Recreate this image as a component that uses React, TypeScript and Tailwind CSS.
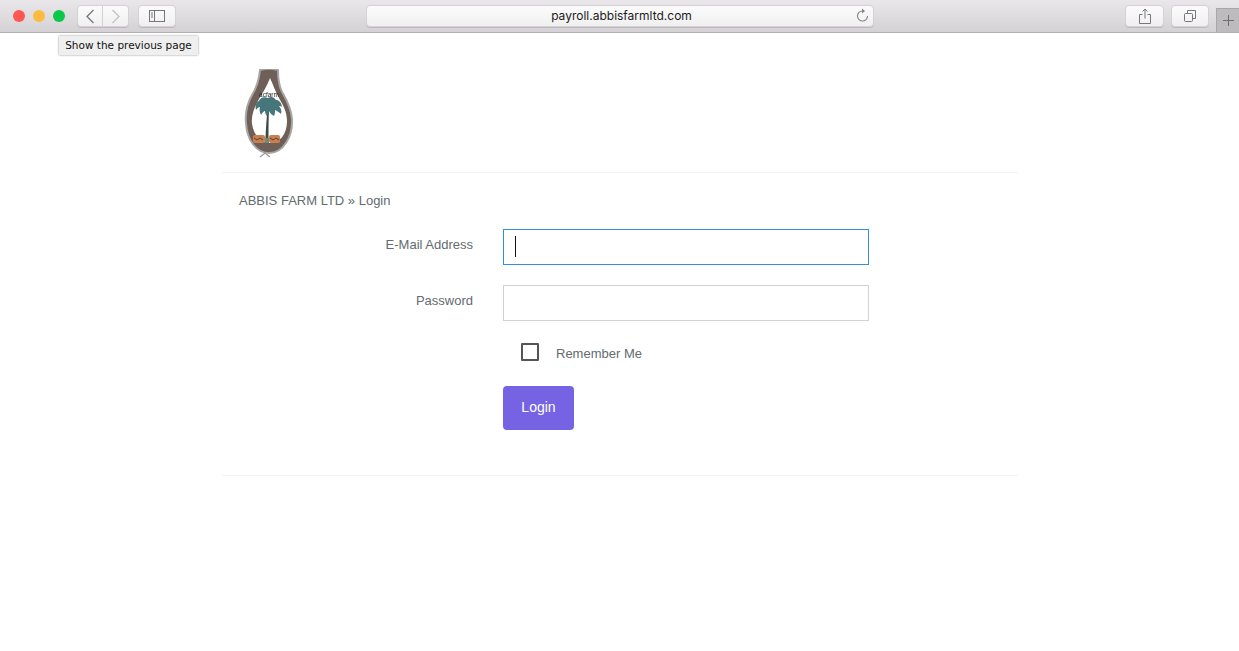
const toolBtn = "flex h-[22px] items-center justify-center rounded-[4px] border border-[#d4d2d4] bg-gradient-to-b from-[#fbfbfb] to-[#f1f0f1] shadow-[0_1px_0_rgba(0,0,0,0.12)]"

function Logo() {
    return (
        <svg width="52" height="90" viewBox="0 0 52 90" className="block blur-[0.5px]">
            <path d="M17 1 C16 12 14 18 9 26 C4 35 2 44 3 54 C4 72 14 84 26 84 C40 84 50 68 49 50 C48 38 43 30 39 23 C36 17 35 10 35 1 C30 -0.500 22 -0.500 17 1 Z" fill="#6e6058" stroke="#a8a5a3" strokeWidth="2" />
            <path d="M27 9 C24 17 20 23 16 30 C11 39 8 47 9 55 C11 67 18 74 27 74 C37 74 44 65 44 52 C44 43 40 36 36 29 C32 22 30 15 27 9 Z" fill="#ffffff" />
            <path d="M22.500 69 C23 58 23.500 50 24.500 41 L26 41 C25.500 50 25.500 60 25.500 69 Z" fill="#3d4a42" />
            <path d="M25 29 C21 27 17 29 16 32 C13 33 12 37 13 41 C14 39 16 38 17 38 C16 41 17 44 18 46 C19 44 21 42 22 42 C22 44 23 46 24 47 L26 42 C27 44 29 46 31 47 C32 45 32 43 32 41 C34 42 36 43 38 45 C39 42 38 39 36 37 C37 37 38 37 39 38 C38 33 36 31 33 31 C31 28 28 27 25 29 Z" fill="#47767a" />
            <text x="26" y="28" textAnchor="middle" fontSize="6.500" fill="#222222" fontFamily="'Liberation Sans', sans-serif">acfarm</text>
            <rect x="10" y="66" width="12" height="8" rx="2" fill="#c9804f" />
            <rect x="26" y="66" width="11" height="8" rx="2" fill="#c9804f" />
            <path d="M11 69 l3 2 l3 -2 l3 2 M27 69 l3 2 l3 -2 l3 2" fill="none" stroke="#5a4030" strokeWidth="1" />
            <path d="M22 69 h4 v5 h-4 Z" fill="#6f8a7a" />
            <path d="M17 88 L22 84 L27 88" fill="none" stroke="#9a9a9a" strokeWidth="1.200" />
        </svg>
    )
}

export default function App() {
    return (
        <div className="relative min-h-[651px] bg-white font-['Liberation_Sans',sans-serif] text-[13px] text-[#636b6f]">
            {/* Safari toolbar */}
            <div className="flex h-[33px] items-center border-b border-[#b1afb1] bg-gradient-to-b from-[#e9e7e9] to-[#d4d2d4]">
                <div className="ml-[13px] flex gap-[8px]">
                    <span className="h-3 w-3 rounded-full bg-[#fc5753]" />
                    <span className="h-3 w-3 rounded-full bg-[#fdbc40]" />
                    <span className="h-3 w-3 rounded-full bg-[#0ac84a]" />
                </div>
                <div className="ml-[12px] flex">
                    <div className={`${toolBtn} w-[26px] rounded-r-none`}>
                        <svg width="10" height="15" viewBox="0 0 10 15" fill="none" stroke="#77757a" strokeWidth="1.300"><path d="M8.500 1 L2 7.500 L8.500 14" /></svg>
                    </div>
                    <div className={`${toolBtn} w-[26px] rounded-l-none border-l-0`}>
                        <svg width="10" height="15" viewBox="0 0 10 15" fill="none" stroke="#c3c1c4" strokeWidth="1.300"><path d="M1.500 1 L8 7.500 L1.500 14" /></svg>
                    </div>
                </div>
                <div className={`${toolBtn} ml-[9px] w-[38px]`}>
                    <svg width="16" height="12" viewBox="0 0 16 12" fill="none" stroke="#77757a"><rect x="0.500" y="0.500" width="15" height="11" /><path d="M5.500 0.500 V11.500" /><path d="M2 3 h2 M2 5 h2 M2 7 h2" /></svg>
                </div>
                <div className={`${toolBtn} relative ml-[190px] w-[508px] pl-[3px]`}>
                    <span className="font-['Inter',sans-serif] text-[12px] text-[#1b1b1b]">payroll.abbisfarmltd.com</span>
                    <svg className="absolute right-[3px] top-[2px]" width="15" height="15" viewBox="0 0 15 15" fill="none" stroke="#858386" strokeWidth="1.100"><path d="M7.500 3 A5 5 0 1 0 12.500 8" /><path d="M7 0.500 L10 3 L7 5.500" fill="#858386" stroke="none" /></svg>
                </div>
                <div className={`${toolBtn} ml-auto w-[39px]`}>
                    <svg width="12" height="16" viewBox="0 0 12 16" fill="none" stroke="#77757a"><path d="M3.500 6.500 H0.500 V15.500 H11.500 V6.500 H8.500" /><path d="M6 1 V10.500 M3.500 3.500 L6 1 L8.500 3.500" /></svg>
                </div>
                <div className={`${toolBtn} ml-[7px] w-[38px]`}>
                    <svg width="12" height="12" viewBox="0 0 12 12" fill="none" stroke="#77757a"><rect x="0.500" y="3.500" width="8" height="8" rx="1" /><path d="M3.500 3.500 V0.500 H11.500 V8.500 H8.500" /></svg>
                </div>
                <div className="ml-[7px] flex h-[24px] w-[23px] items-center justify-center self-end border-l border-t border-[#a9a7a9] bg-[#bdbbbd]">
                    <svg width="11" height="11" viewBox="0 0 11 11" stroke="#6f6d6f"><path d="M5.500 0 V11 M0 5.500 H11" /></svg>
                </div>
            </div>

            {/* Back button tooltip */}
            <div className="absolute left-[59px] top-[36px] flex h-[19px] w-[139px] items-center justify-center bg-[#efefef] font-['DejaVu_Sans',sans-serif] text-[10.5px] text-[#111111] shadow-[0_0_2px_rgba(0,0,0,0.45)]">
                Show the previous page
            </div>

            <div className="ml-[222px] w-[796px]">
                <div className="h-[140px] border-b border-[#f2f2f2] pl-[21px] pt-[36px]">
                    <Logo />
                </div>

                <div className="h-[303px] border-b border-[#f2f2f2] pt-[20px]">
                    <div className="pl-[17px] leading-[15px]">ABBIS FARM LTD » Login</div>

                    <div className="mt-[21px] flex items-start">
                        <label className="w-[251px] pt-[8px] text-right leading-[15px]">E-Mail Address</label>
                        <div className="relative ml-[30px] h-[36px] w-[366px] border border-[#3490dc] bg-white">
                            <span className="absolute left-[11px] top-[6px] h-[21px] w-px bg-[#111111]" />
                        </div>
                    </div>

                    <div className="mt-[20px] flex items-start">
                        <label className="w-[251px] pt-[8px] text-right leading-[15px]">Password</label>
                        <div className="ml-[30px] h-[36px] w-[366px] border border-[#d2d2d2] bg-white" />
                    </div>

                    <div className="ml-[299px] mt-[22px] flex items-start">
                        <span className="h-[18px] w-[18px] rounded-[1px] border-2 border-[#555555] bg-white" />
                        <span className="ml-[17px] mt-[1px] leading-[20px]">Remember Me</span>
                    </div>

                    <button className="ml-[281px] mt-[22px] block h-[44px] w-[71px] rounded-[4px] bg-[#7563e4] pb-[2px] text-[14px] text-white">Login</button>
                </div>
            </div>
        </div>
    )
}
